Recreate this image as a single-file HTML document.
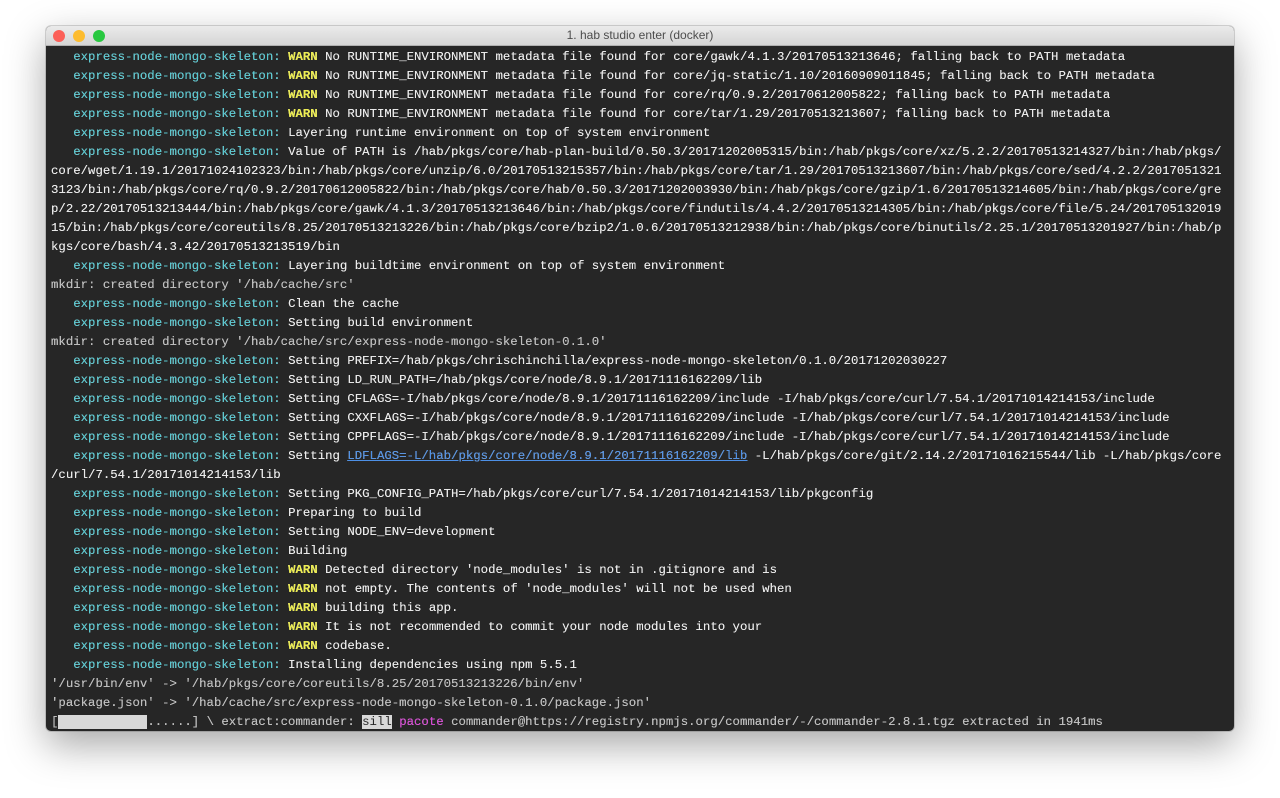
<!DOCTYPE html>
<html><head><meta charset="utf-8"><style>
body{margin:0;background:#fff;width:1280px;height:798px;overflow:hidden}
.win{position:absolute;left:46px;top:26px;width:1188px;height:705px;background:#262626;border-radius:5px;box-shadow:0 14px 40px rgba(0,0,0,.35),0 0 0 1px rgba(0,0,0,.15);overflow:hidden}
.tb{height:19px;background:linear-gradient(#ebebeb,#d5d5d5);border-bottom:1px solid #b0b0b0;text-align:center;font:12px "Liberation Sans",sans-serif;color:#4d4d4d;line-height:19px;position:relative}
.d{position:absolute;top:4px;width:12px;height:12px;border-radius:50%}
pre{margin:0;position:absolute;left:5px;top:22px;font-family:"Liberation Mono",monospace;font-size:12.35px;line-height:19px;color:#ececec;text-shadow:0 0 0.3px #ececec}
.c{color:#52c9d2}.y{color:#ecec4f;font-weight:bold}.g{color:#bdbdbd}.m{color:#d93fd6}
.l{color:#4d90e6;text-decoration:underline}.s{background:#d8d8d8;color:#262626}
</style></head><body><div class="win"><div class="tb"><span class="d" style="left:7px;background:#fc5f57"></span><span class="d" style="left:27px;background:#fdbc2e"></span><span class="d" style="left:47px;background:#28c840"></span>1. hab studio enter (docker)</div>
<pre>   <span class="c">express-node-mongo-skeleton:</span> <span class="y">WARN</span> No RUNTIME_ENVIRONMENT metadata file found for core/gawk/4.1.3/20170513213646; falling back to PATH metadata
   <span class="c">express-node-mongo-skeleton:</span> <span class="y">WARN</span> No RUNTIME_ENVIRONMENT metadata file found for core/jq-static/1.10/20160909011845; falling back to PATH metadata
   <span class="c">express-node-mongo-skeleton:</span> <span class="y">WARN</span> No RUNTIME_ENVIRONMENT metadata file found for core/rq/0.9.2/20170612005822; falling back to PATH metadata
   <span class="c">express-node-mongo-skeleton:</span> <span class="y">WARN</span> No RUNTIME_ENVIRONMENT metadata file found for core/tar/1.29/20170513213607; falling back to PATH metadata
   <span class="c">express-node-mongo-skeleton:</span> Layering runtime environment on top of system environment
   <span class="c">express-node-mongo-skeleton:</span> Value of PATH is /hab/pkgs/core/hab-plan-build/0.50.3/20171202005315/bin:/hab/pkgs/core/xz/5.2.2/20170513214327/bin:/hab/pkgs/
core/wget/1.19.1/20171024102323/bin:/hab/pkgs/core/unzip/6.0/20170513215357/bin:/hab/pkgs/core/tar/1.29/20170513213607/bin:/hab/pkgs/core/sed/4.2.2/2017051321
3123/bin:/hab/pkgs/core/rq/0.9.2/20170612005822/bin:/hab/pkgs/core/hab/0.50.3/20171202003930/bin:/hab/pkgs/core/gzip/1.6/20170513214605/bin:/hab/pkgs/core/gre
p/2.22/20170513213444/bin:/hab/pkgs/core/gawk/4.1.3/20170513213646/bin:/hab/pkgs/core/findutils/4.4.2/20170513214305/bin:/hab/pkgs/core/file/5.24/201705132019
15/bin:/hab/pkgs/core/coreutils/8.25/20170513213226/bin:/hab/pkgs/core/bzip2/1.0.6/20170513212938/bin:/hab/pkgs/core/binutils/2.25.1/20170513201927/bin:/hab/p
kgs/core/bash/4.3.42/20170513213519/bin
   <span class="c">express-node-mongo-skeleton:</span> Layering buildtime environment on top of system environment
<span class="g">mkdir: created directory '/hab/cache/src'</span>
   <span class="c">express-node-mongo-skeleton:</span> Clean the cache
   <span class="c">express-node-mongo-skeleton:</span> Setting build environment
<span class="g">mkdir: created directory '/hab/cache/src/express-node-mongo-skeleton-0.1.0'</span>
   <span class="c">express-node-mongo-skeleton:</span> Setting PREFIX=/hab/pkgs/chrischinchilla/express-node-mongo-skeleton/0.1.0/20171202030227
   <span class="c">express-node-mongo-skeleton:</span> Setting LD_RUN_PATH=/hab/pkgs/core/node/8.9.1/20171116162209/lib
   <span class="c">express-node-mongo-skeleton:</span> Setting CFLAGS=-I/hab/pkgs/core/node/8.9.1/20171116162209/include -I/hab/pkgs/core/curl/7.54.1/20171014214153/include
   <span class="c">express-node-mongo-skeleton:</span> Setting CXXFLAGS=-I/hab/pkgs/core/node/8.9.1/20171116162209/include -I/hab/pkgs/core/curl/7.54.1/20171014214153/include
   <span class="c">express-node-mongo-skeleton:</span> Setting CPPFLAGS=-I/hab/pkgs/core/node/8.9.1/20171116162209/include -I/hab/pkgs/core/curl/7.54.1/20171014214153/include
   <span class="c">express-node-mongo-skeleton:</span> Setting <span class="l">LDFLAGS=-L/hab/pkgs/core/node/8.9.1/20171116162209/lib</span> -L/hab/pkgs/core/git/2.14.2/20171016215544/lib -L/hab/pkgs/core
/curl/7.54.1/20171014214153/lib
   <span class="c">express-node-mongo-skeleton:</span> Setting PKG_CONFIG_PATH=/hab/pkgs/core/curl/7.54.1/20171014214153/lib/pkgconfig
   <span class="c">express-node-mongo-skeleton:</span> Preparing to build
   <span class="c">express-node-mongo-skeleton:</span> Setting NODE_ENV=development
   <span class="c">express-node-mongo-skeleton:</span> Building
   <span class="c">express-node-mongo-skeleton:</span> <span class="y">WARN</span> Detected directory 'node_modules' is not in .gitignore and is
   <span class="c">express-node-mongo-skeleton:</span> <span class="y">WARN</span> not empty. The contents of 'node_modules' will not be used when
   <span class="c">express-node-mongo-skeleton:</span> <span class="y">WARN</span> building this app.
   <span class="c">express-node-mongo-skeleton:</span> <span class="y">WARN</span> It is not recommended to commit your node modules into your
   <span class="c">express-node-mongo-skeleton:</span> <span class="y">WARN</span> codebase.
   <span class="c">express-node-mongo-skeleton:</span> Installing dependencies using npm 5.5.1
<span class="g">'/usr/bin/env' -&gt; '/hab/pkgs/core/coreutils/8.25/20170513213226/bin/env'</span>
<span class="g">'package.json' -&gt; '/hab/cache/src/express-node-mongo-skeleton-0.1.0/package.json'</span>
<span class="g">[<span class="s">            </span>......] \ extract:commander: <span class="s">sill</span> <span class="m">pacote</span> commander@https://registry.npmjs.org/commander/-/commander-2.8.1.tgz extracted in 1941ms</span></pre>
</div></body></html>
